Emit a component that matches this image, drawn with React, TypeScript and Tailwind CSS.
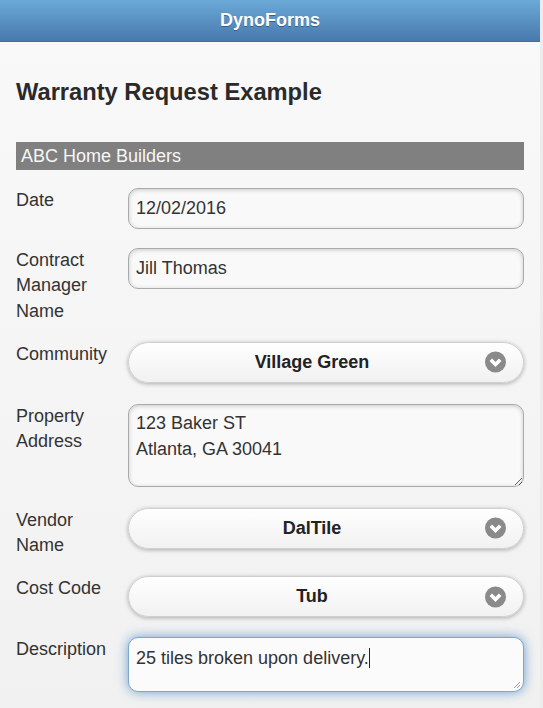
import React from 'react'

const font = { fontFamily: '"Liberation Sans", Arial, Helvetica, sans-serif' }

function Chevron() {
  return (
    <span className="absolute right-[17px] top-1/2 -translate-y-1/2 w-[21px] h-[21px] rounded-full bg-[#8a8a8a] flex items-center justify-center">
      <svg width="21" height="21" viewBox="0 0 21 21">
        <polyline points="5.8,8.3 10.5,13 15.2,8.3" fill="none" stroke="#fff" strokeWidth="3.6" strokeLinecap="butt" strokeLinejoin="miter" />
      </svg>
    </span>
  )
}

function Label({ children }: { children: React.ReactNode }) {
  return <div className="w-[112px] shrink-0 text-[18px] leading-[25.3px] text-[#333]">{children}</div>
}

function TextInput({ value }: { value: string }) {
  return (
    <input
      readOnly
      value={value}
      className="flex-1 h-[41px] rounded-[10px] border border-[#aaa] bg-[#f9f9f9] px-[7px] text-[18px] text-[#333] outline-none shadow-[inset_0_1px_4px_rgba(0,0,0,0.2)]"
      style={font}
    />
  )
}

function Select({ value }: { value: string }) {
  return (
    <div className="relative flex-1 h-[41px] rounded-full border border-[#cfcfcf] bg-gradient-to-b from-[#ffffff] to-[#f1f1f1] shadow-[0_1px_4px_rgba(0,0,0,0.3)] flex items-center justify-center pl-[18px] pr-[46px] text-[18px] font-bold text-[#222]">
      {value}
      <Chevron />
    </div>
  )
}

export default function App() {
  return (
    <div className="flex h-[708px] overflow-hidden bg-[#ececec]" style={font}>
      <div className="w-[540px] shrink-0 bg-gradient-to-b from-[#f9f9f9] to-[#f1f1f1]">
        <header className="h-[42px] bg-gradient-to-b from-[#6baad8] to-[#4879ac] border-b border-[#44709c] flex items-center justify-center">
          <span className="text-white font-bold text-[18px] [text-shadow:0_1px_0_#2f5f8f]">DynoForms</span>
        </header>

        <div className="px-[16px]">
          <h1 className="pt-[37px] text-[23.7px] leading-[27px] font-bold text-[#2a2a2a]">Warranty Request Example</h1>

          <div className="mt-[36px] w-[508px] h-[28px] bg-[#808080] pl-[5px] text-[18px] leading-[28px] text-[#f7f7f7]">
            ABC Home Builders
          </div>

          <div className="mt-[18px] flex flex-col">
            <div className="flex items-start">
              <Label>Date</Label>
              <TextInput value="12/02/2016" />
            </div>

            <div className="mt-[19px] flex items-start">
              <Label>Contract<br />Manager<br />Name</Label>
              <TextInput value="Jill Thomas" />
            </div>

            <div className="mt-[18px] flex items-start">
              <Label>Community</Label>
              <Select value="Village Green" />
            </div>

            <div className="mt-[21px] flex items-start">
              <Label>Property<br />Address</Label>
              <textarea
                readOnly
                value={'123 Baker ST\nAtlanta, GA 30041'}
                className="flex-1 h-[83px] rounded-[10px] border border-[#aaa] bg-[#f9f9f9] px-[7px] pt-[5px] pb-[7px] text-[18px] leading-[26px] text-[#333] outline-none shadow-[inset_0_1px_4px_rgba(0,0,0,0.2)]"
                style={font}
              />
            </div>

            <div className="mt-[21px] flex items-start">
              <Label>Vendor<br />Name</Label>
              <Select value="DalTile" />
            </div>

            <div className="mt-[18px] flex items-start">
              <Label>Cost Code</Label>
              <Select value="Tub" />
            </div>

            <div className="mt-[20px] flex items-start">
              <Label>Description</Label>
              <div className="relative flex-1 h-[55px] rounded-[10px] border border-[#7fa6cf] bg-[#fbfbfb] px-[7px] pt-[7px] text-[18px] leading-[26px] text-[#333] shadow-[0_0_12px_rgba(56,123,190,0.7)]">
                25 tiles broken upon delivery.<span className="inline-block w-px h-[20px] bg-[#222] align-[-4px]" />
                <svg className="absolute right-[2px] bottom-[2px]" width="8" height="8" viewBox="0 0 8 8">
                  <line x1="1" y1="7" x2="7" y2="1" stroke="#999" strokeWidth="1" />
                  <line x1="4" y1="7" x2="7" y2="4" stroke="#999" strokeWidth="1" />
                </svg>
              </div>
            </div>
          </div>
        </div>
      </div>
      <div className="flex-1" />
    </div>
  )
}
